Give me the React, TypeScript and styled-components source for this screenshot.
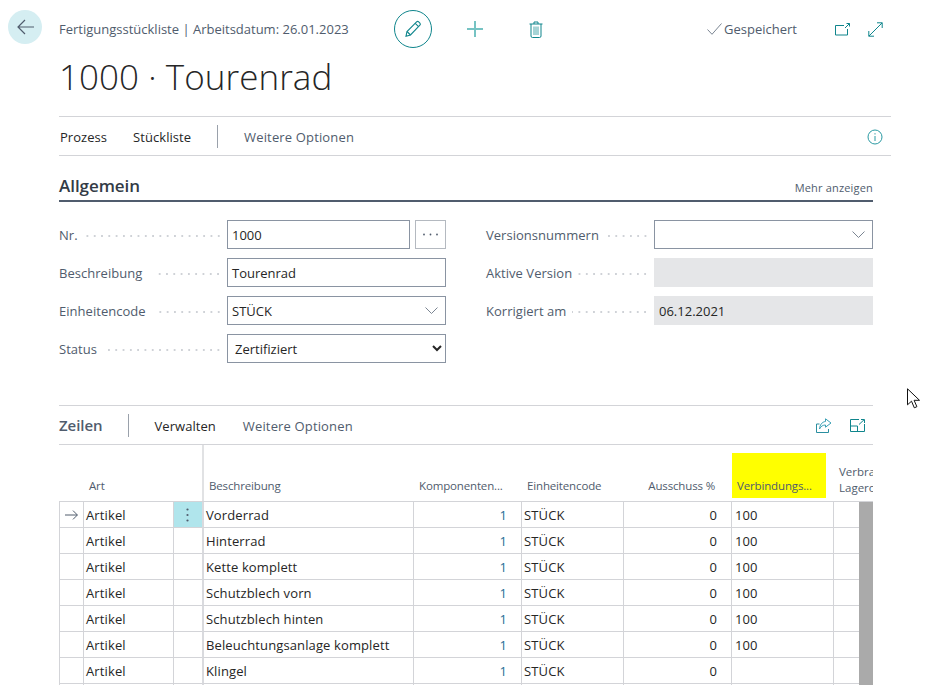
import styled, { createGlobalStyle } from "styled-components"

const teal = "#0f858c"
const slate = "#505c6d"
const ink = "#262626"
const line = "#d3d4d8"

const GlobalStyle = createGlobalStyle`
  html, body {
    margin: 0;
    background: #fff;
  }
  body {
    font-family: "Open Sans", "Liberation Sans", sans-serif;
    font-size: 13px;
    color: ${ink};
  }
`

const Page = styled.div`
  position: relative;
  width: 935px;
  height: 685px;
  overflow: hidden;
`

const TopBar = styled.header`
  display: flex;
  align-items: center;
  height: 38px;
  padding: 10px 52px 0 8px;
`

const BackButton = styled.button`
  display: flex;
  align-items: center;
  justify-content: center;
  align-self: flex-start;
  flex: none;
  width: 34px;
  height: 34px;
  padding: 0;
  margin-right: 17px;
  border: 0;
  border-radius: 50%;
  background: #d5eef2;
`

const Breadcrumb = styled.div`
  flex: none;
  width: 335px;
  color: ${slate};
  font-size: 13px;
`

const EditButton = styled.button`
  display: flex;
  align-items: center;
  justify-content: center;
  flex: none;
  width: 38px;
  height: 38px;
  padding: 0;
  border: 1px solid ${teal};
  border-radius: 50%;
  background: #fff;
`

const ToolIcon = styled.div<{ $gap: number }>`
  display: flex;
  align-items: center;
  justify-content: center;
  flex: none;
  width: 24px;
  height: 24px;
  margin-left: ${(p) => p.$gap}px;
`

const Saved = styled.div`
  display: flex;
  align-items: center;
  gap: 2px;
  margin-left: auto;
  color: ${slate};
  font-size: 13px;
`

const WindowIcons = styled.div`
  display: flex;
  align-items: center;
  gap: 18px;
  margin-left: 38px;
`

const Content = styled.main`
  padding-left: 59px;
`

const Title = styled.h1`
  height: 68px;
  margin: 0;
  padding-top: 5px;
  box-sizing: border-box;
  color: ${ink};
  font-size: 35px;
  font-weight: 300;
  line-height: 48px;
  letter-spacing: 0.05px;
`

const ActionBar = styled.nav<{ $wide?: boolean }>`
  display: flex;
  align-items: center;
  box-sizing: border-box;
  width: ${(p) => (p.$wide ? 832 : 814)}px;
  height: 40px;
  padding: 1px 8px 0 0;
  border-top: 1px solid ${line};
  border-bottom: 1px solid ${line};
`

const ActionLabel = styled.span<{ $muted?: boolean; $gap: number }>`
  margin-left: ${(p) => p.$gap}px;
  color: ${(p) => (p.$muted ? slate : ink)};
  font-size: 13px;
  letter-spacing: ${(p) => (p.$muted ? 0.15 : 0.05)}px;
  white-space: nowrap;
`

const BarDivider = styled.span<{ $gap: number }>`
  width: 1px;
  height: 23px;
  margin-left: ${(p) => p.$gap}px;
  background: #9aa1ab;
`

const BarEnd = styled.div`
  display: flex;
  align-items: center;
  gap: 18px;
  margin-left: auto;
`

const SectionHead = styled.div`
  display: flex;
  align-items: flex-end;
  justify-content: space-between;
  box-sizing: border-box;
  width: 814px;
  height: 46px;
  padding-bottom: 2px;
  border-bottom: 2px solid ${slate};
`

const SectionTitle = styled.h2`
  margin: 0;
  color: #333b46;
  font-size: 17px;
  font-weight: 600;
  line-height: 24px;
  letter-spacing: -0.05px;
`

const MoreLink = styled.span`
  color: ${slate};
  font-size: 11px;
  line-height: 20px;
  letter-spacing: 0.18px;
`

const FieldGrid = styled.section`
  display: grid;
  grid-template-columns: 387px 387px;
  column-gap: 40px;
  margin-top: 18px;
`

const FieldColumn = styled.div`
  display: flex;
  flex-direction: column;
  gap: 9px;
`

const FieldRow = styled.div`
  display: flex;
  align-items: center;
  height: 29px;
`

const FieldLabel = styled.span`
  flex: none;
  color: ${slate};
  font-size: 13px;
  letter-spacing: 0.03px;
`

const Leader = styled.span<{ $gap: number }>`
  flex: 1;
  height: 2px;
  margin: 2px 5px 0 ${(p) => p.$gap}px;
  background-image: radial-gradient(circle at center, #cfd2d7 0.8px, transparent 1px);
  background-size: 7.3px 2px;
  background-position: right center;
`

const FieldBox = styled.div<{ $width: number; $disabled?: boolean }>`
  display: flex;
  align-items: center;
  justify-content: space-between;
  flex: none;
  box-sizing: border-box;
  width: ${(p) => p.$width}px;
  height: 29px;
  padding: 0 7px 0 4px;
  border: ${(p) => (p.$disabled ? "0" : "1px solid #8a94a2")};
  background: ${(p) => (p.$disabled ? "#e5e6e8" : "#fff")};
  color: ${ink};
  font-size: 13px;
  ${(p) => p.$disabled && "padding-left: 5px;"}
`

const FieldSelect = styled.select`
  flex: none;
  box-sizing: border-box;
  width: 219px;
  height: 29px;
  padding: 0 0 0 3px;
  border: 1px solid #8a94a2;
  border-radius: 0;
  background: #fff;
  color: ${ink};
  font-family: inherit;
  font-size: 13px;
`

const LookupButton = styled.button`
  display: flex;
  align-items: center;
  justify-content: center;
  flex: none;
  box-sizing: border-box;
  width: 31px;
  height: 29px;
  margin-left: 5px;
  padding: 0;
  border: 1px solid #b4b9c0;
  background: #fff;
`

const LinesSection = styled.section`
  margin-top: 42px;
`

const LinesTitle = styled.h2`
  margin: -2px 0 0;
  color: ${slate};
  font-size: 15px;
  font-weight: 600;
  letter-spacing: -0.05px;
`

const Table = styled.div`
  width: 814px;
  overflow: hidden;
`

const columns = "24px 90px 29px 211px 108px 102px 108px 102px 1fr"

const HeadRow = styled.div`
  display: grid;
  grid-template-columns: ${columns};
  box-sizing: border-box;
  height: 57px;
  border-bottom: 1px solid ${line};
`

const HeadCell = styled.div<{ $pad?: number; $end?: boolean; $split?: boolean }>`
  display: flex;
  align-items: flex-end;
  justify-content: ${(p) => (p.$end ? "flex-end" : "flex-start")};
  box-sizing: border-box;
  padding: 0 ${(p) => (p.$end ? 16 : 0)}px 7px ${(p) => p.$pad ?? 0}px;
  color: ${slate};
  font-size: 11.5px;
  line-height: 16px;
  letter-spacing: -0.15px;
  white-space: nowrap;
  ${(p) => p.$split && "border-left: 2px solid #e1e2e4;"}
`

const HighlightedHead = styled.div`
  display: flex;
  align-items: flex-end;
  box-sizing: border-box;
  width: 94px;
  height: 45px;
  margin: 8px 0 0 1px;
  padding: 0 0 4px 5px;
  background: #ffff00;
  color: ${slate};
  font-size: 11.5px;
  line-height: 16px;
  letter-spacing: -0.15px;
  white-space: nowrap;
`

const WrappedHead = styled.div`
  display: flex;
  flex-direction: column;
  justify-content: flex-end;
  padding: 0 0 5px 6px;
  color: ${slate};
  font-size: 11.5px;
  line-height: 16px;
  white-space: nowrap;
`

const TableBody = styled.div`
  display: flex;
`

const Rows = styled.div`
  flex: none;
  width: 800px;
`

const ScrollThumb = styled.div`
  flex: 1;
  background: #aaaaaa;
`

const Row = styled.div`
  display: grid;
  grid-template-columns: ${columns};
  height: 26px;
`

const Cell = styled.div<{ $pad?: number; $end?: boolean; $link?: boolean; $split?: boolean; $active?: boolean }>`
  display: flex;
  align-items: center;
  justify-content: ${(p) => (p.$end ? "flex-end" : "flex-start")};
  box-sizing: border-box;
  min-width: 0;
  padding: 0 ${(p) => (p.$end ? 14 : 0)}px 0 ${(p) => p.$pad ?? 2}px;
  border-left: ${(p) => (p.$split ? `2px solid #d9dade` : `1px solid ${line}`)};
  border-bottom: 1px solid ${line};
  background: ${(p) => (p.$active ? "#b0e5ec" : "transparent")};
  color: ${(p) => (p.$link ? "#1f6f96" : ink)};
  font-size: 13px;
  letter-spacing: 0.12px;
  white-space: nowrap;
`

const Pointer = styled.svg`
  position: absolute;
  top: 388px;
  left: 907px;
`

const BackIcon = () => (
  <svg width="17" height="16" viewBox="0 0 17 16" fill="none" stroke={slate} strokeWidth="1.2">
    <path d="M17 8H1M8 1 1 8l7 7" />
  </svg>
)

const PencilIcon = () => (
  <svg width="18" height="18" viewBox="0 0 18 18" fill="none" stroke={teal} strokeWidth="1.1">
    <path d="M2 16.2l1-4.7L12.6 1.9a1.5 1.5 0 0 1 2.1 0l1.2 1.2a1.5 1.5 0 0 1 0 2.1L6.5 15z" />
    <path d="M3 11.5 6.5 15M11.2 3.3l3.4 3.4" />
  </svg>
)

const PlusIcon = () => (
  <svg width="16" height="16" viewBox="0 0 16 16" fill="none" stroke="#76c3c3" strokeWidth="2">
    <path d="M8 0v16M0 8h16" />
  </svg>
)

const TrashIcon = () => (
  <svg width="14" height="17" viewBox="0 0 14 17" fill="none" stroke={teal} strokeWidth="1">
    <path d="M.5 3h13M5 3V1h4v2M2 3v12a1.5 1.5 0 0 0 1.5 1.5h7A1.5 1.5 0 0 0 12 15V3" />
    <path d="M5 5.5v8.5M7 5.5v8.5M9 5.5v8.5" stroke="#4ea9ad" />
  </svg>
)

const CheckIcon = () => (
  <svg width="15" height="12" viewBox="0 0 15 12" fill="none" stroke="#7b8592" strokeWidth="1">
    <path d="M.5 6.5l4.5 4.8L14.5.5" />
  </svg>
)

const OpenIcon = () => (
  <svg width="15" height="13" viewBox="0 0 15 13" fill="none" stroke={teal} strokeWidth="1">
    <path d="M9 2.5H.5v9.5H12.5V6" />
    <path d="M10 5 14.5.5M11.5.5h3v3" />
  </svg>
)

const ExpandIcon = () => (
  <svg width="15" height="15" viewBox="0 0 15 15" fill="none" stroke={teal} strokeWidth="1">
    <path d="M.8 14.2 14.2.8M9 .8h5.2V6M.8 9v5.2H6" />
  </svg>
)

const InfoIcon = () => (
  <svg width="16" height="16" viewBox="0 0 16 16" fill="none" stroke="#2a9aa3" strokeWidth="1">
    <circle cx="8" cy="8" r="7" />
    <path d="M8 7v5M8 4.2v1.3" />
  </svg>
)

const ChevronIcon = () => (
  <svg width="13" height="7" viewBox="0 0 13 7" fill="none" stroke="#7b8592" strokeWidth="1">
    <path d="M.5.5l6 6 6-6" />
  </svg>
)

const DotsIcon = () => (
  <svg width="15" height="3" viewBox="0 0 15 3" fill={slate}>
    <circle cx="1" cy="1.5" r="0.9" />
    <circle cx="7.5" cy="1.5" r="0.9" />
    <circle cx="14" cy="1.5" r="0.9" />
  </svg>
)

const KebabIcon = () => (
  <svg width="3" height="14" viewBox="0 0 3 14" fill={slate}>
    <circle cx="1.5" cy="1.5" r="1.1" />
    <circle cx="1.5" cy="7" r="1.1" />
    <circle cx="1.5" cy="12.5" r="1.1" />
  </svg>
)

const RowArrow = () => (
  <svg width="13" height="10" viewBox="0 0 13 10" fill="none" stroke={slate} strokeWidth="1">
    <path d="M0 5h12.3M8 .6 12.4 5 8 9.4" />
  </svg>
)

const ShareIcon = () => (
  <svg width="16" height="15" viewBox="0 0 16 15" fill="none" stroke={teal} strokeWidth="1">
    <path d="M3.5 6H.5v8.5h12V11" stroke="#2a8fa0" />
    <path d="M9.5.8 15 5l-5.5 4.2V7C7 7 5 8 3.5 11 3.8 7 6 3.8 9.5 3.5z" stroke="#3aa0b5" />
  </svg>
)

const FocusIcon = () => (
  <svg width="15" height="13" viewBox="0 0 15 13" fill="none" stroke={teal} strokeWidth="1">
    <path d="M9 .5H.5v12h14V5" />
    <path d="M.5 7h7v5.5M9 5.5 14 .8M11 .5h3.5V4" />
  </svg>
)

const lines: { name: string; link: string }[] = [
  { name: "Vorderrad", link: "100" },
  { name: "Hinterrad", link: "100" },
  { name: "Kette komplett", link: "100" },
  { name: "Schutzblech vorn", link: "100" },
  { name: "Schutzblech hinten", link: "100" },
  { name: "Beleuchtungsanlage komplett", link: "100" },
  { name: "Klingel", link: "" },
]

const App = () => {
  return (
    <Page>
      <GlobalStyle />
      <TopBar>
        <BackButton><BackIcon /></BackButton>
        <Breadcrumb>Fertigungsstückliste | Arbeitsdatum: 26.01.2023</Breadcrumb>
        <EditButton><PencilIcon /></EditButton>
        <ToolIcon $gap={31}><PlusIcon /></ToolIcon>
        <ToolIcon $gap={37}><TrashIcon /></ToolIcon>
        <Saved><CheckIcon />Gespeichert</Saved>
        <WindowIcons>
          <OpenIcon />
          <ExpandIcon />
        </WindowIcons>
      </TopBar>
      <Content>
        <Title>1000 · Tourenrad</Title>
        <ActionBar $wide>
          <ActionLabel $gap={1}>Prozess</ActionLabel>
          <ActionLabel $gap={26}>Stückliste</ActionLabel>
          <BarDivider $gap={26} />
          <ActionLabel $muted $gap={26}>Weitere Optionen</ActionLabel>
          <BarEnd><InfoIcon /></BarEnd>
        </ActionBar>
        <SectionHead>
          <SectionTitle>Allgemein</SectionTitle>
          <MoreLink>Mehr anzeigen</MoreLink>
        </SectionHead>
        <FieldGrid>
          <FieldColumn>
            <FieldRow>
              <FieldLabel>Nr.</FieldLabel>
              <Leader $gap={6} />
              <FieldBox $width={183}>1000</FieldBox>
              <LookupButton><DotsIcon /></LookupButton>
            </FieldRow>
            <FieldRow>
              <FieldLabel>Beschreibung</FieldLabel>
              <Leader $gap={13} />
              <FieldBox $width={219}>Tourenrad</FieldBox>
            </FieldRow>
            <FieldRow>
              <FieldLabel>Einheitencode</FieldLabel>
              <Leader $gap={10} />
              <FieldBox $width={219}>STÜCK<ChevronIcon /></FieldBox>
            </FieldRow>
            <FieldRow>
              <FieldLabel>Status</FieldLabel>
              <Leader $gap={10} />
              <FieldSelect defaultValue="Zertifiziert">
                <option>Zertifiziert</option>
              </FieldSelect>
            </FieldRow>
          </FieldColumn>
          <FieldColumn>
            <FieldRow>
              <FieldLabel>Versionsnummern</FieldLabel>
              <Leader $gap={8} />
              <FieldBox $width={219}><span /><ChevronIcon /></FieldBox>
            </FieldRow>
            <FieldRow>
              <FieldLabel>Aktive Version</FieldLabel>
              <Leader $gap={6} />
              <FieldBox $width={219} $disabled />
            </FieldRow>
            <FieldRow>
              <FieldLabel>Korrigiert am</FieldLabel>
              <Leader $gap={6} />
              <FieldBox $width={219} $disabled>06.12.2021</FieldBox>
            </FieldRow>
          </FieldColumn>
        </FieldGrid>
        <LinesSection>
          <ActionBar>
            <LinesTitle>Zeilen</LinesTitle>
            <BarDivider $gap={25} />
            <ActionLabel $gap={26}>Verwalten</ActionLabel>
            <ActionLabel $muted $gap={27}>Weitere Optionen</ActionLabel>
            <BarEnd>
              <ShareIcon />
              <FocusIcon />
            </BarEnd>
          </ActionBar>
          <Table>
            <HeadRow>
              <HeadCell />
              <HeadCell $pad={6}>Art</HeadCell>
              <HeadCell />
              <HeadCell $split $pad={5}>Beschreibung</HeadCell>
              <HeadCell $pad={6}>Komponenten...</HeadCell>
              <HeadCell $pad={6}>Einheitencode</HeadCell>
              <HeadCell $end>Ausschuss %</HeadCell>
              <HighlightedHead>Verbindungs...</HighlightedHead>
              <WrappedHead>
                <span>Verbrauch</span>
                <span>Lagerort</span>
              </WrappedHead>
            </HeadRow>
            <TableBody>
              <Rows>
                {lines.map((item, index) => (
                  <Row key={item.name}>
                    <Cell $pad={5}>{index === 0 && <RowArrow />}</Cell>
                    <Cell>Artikel</Cell>
                    <Cell $pad={12} $active={index === 0}>{index === 0 && <KebabIcon />}</Cell>
                    <Cell $split>{item.name}</Cell>
                    <Cell $end $link>1</Cell>
                    <Cell>STÜCK</Cell>
                    <Cell $end>0</Cell>
                    <Cell $pad={3}>{item.link}</Cell>
                    <Cell />
                  </Row>
                ))}
                <Row>
                  <Cell />
                  <Cell />
                  <Cell />
                  <Cell $split />
                  <Cell />
                  <Cell />
                  <Cell />
                  <Cell />
                  <Cell />
                </Row>
              </Rows>
              <ScrollThumb />
            </TableBody>
          </Table>
        </LinesSection>
      </Content>
      <Pointer width="14" height="21" viewBox="0 0 14 21" fill="#fff" stroke="#111" strokeWidth="1">
        <path d="M.5.8v16l4-3.6 2.8 6.6 2.6-1.1-2.8-6.4h5.4z" />
      </Pointer>
    </Page>
  )
}

export default App
